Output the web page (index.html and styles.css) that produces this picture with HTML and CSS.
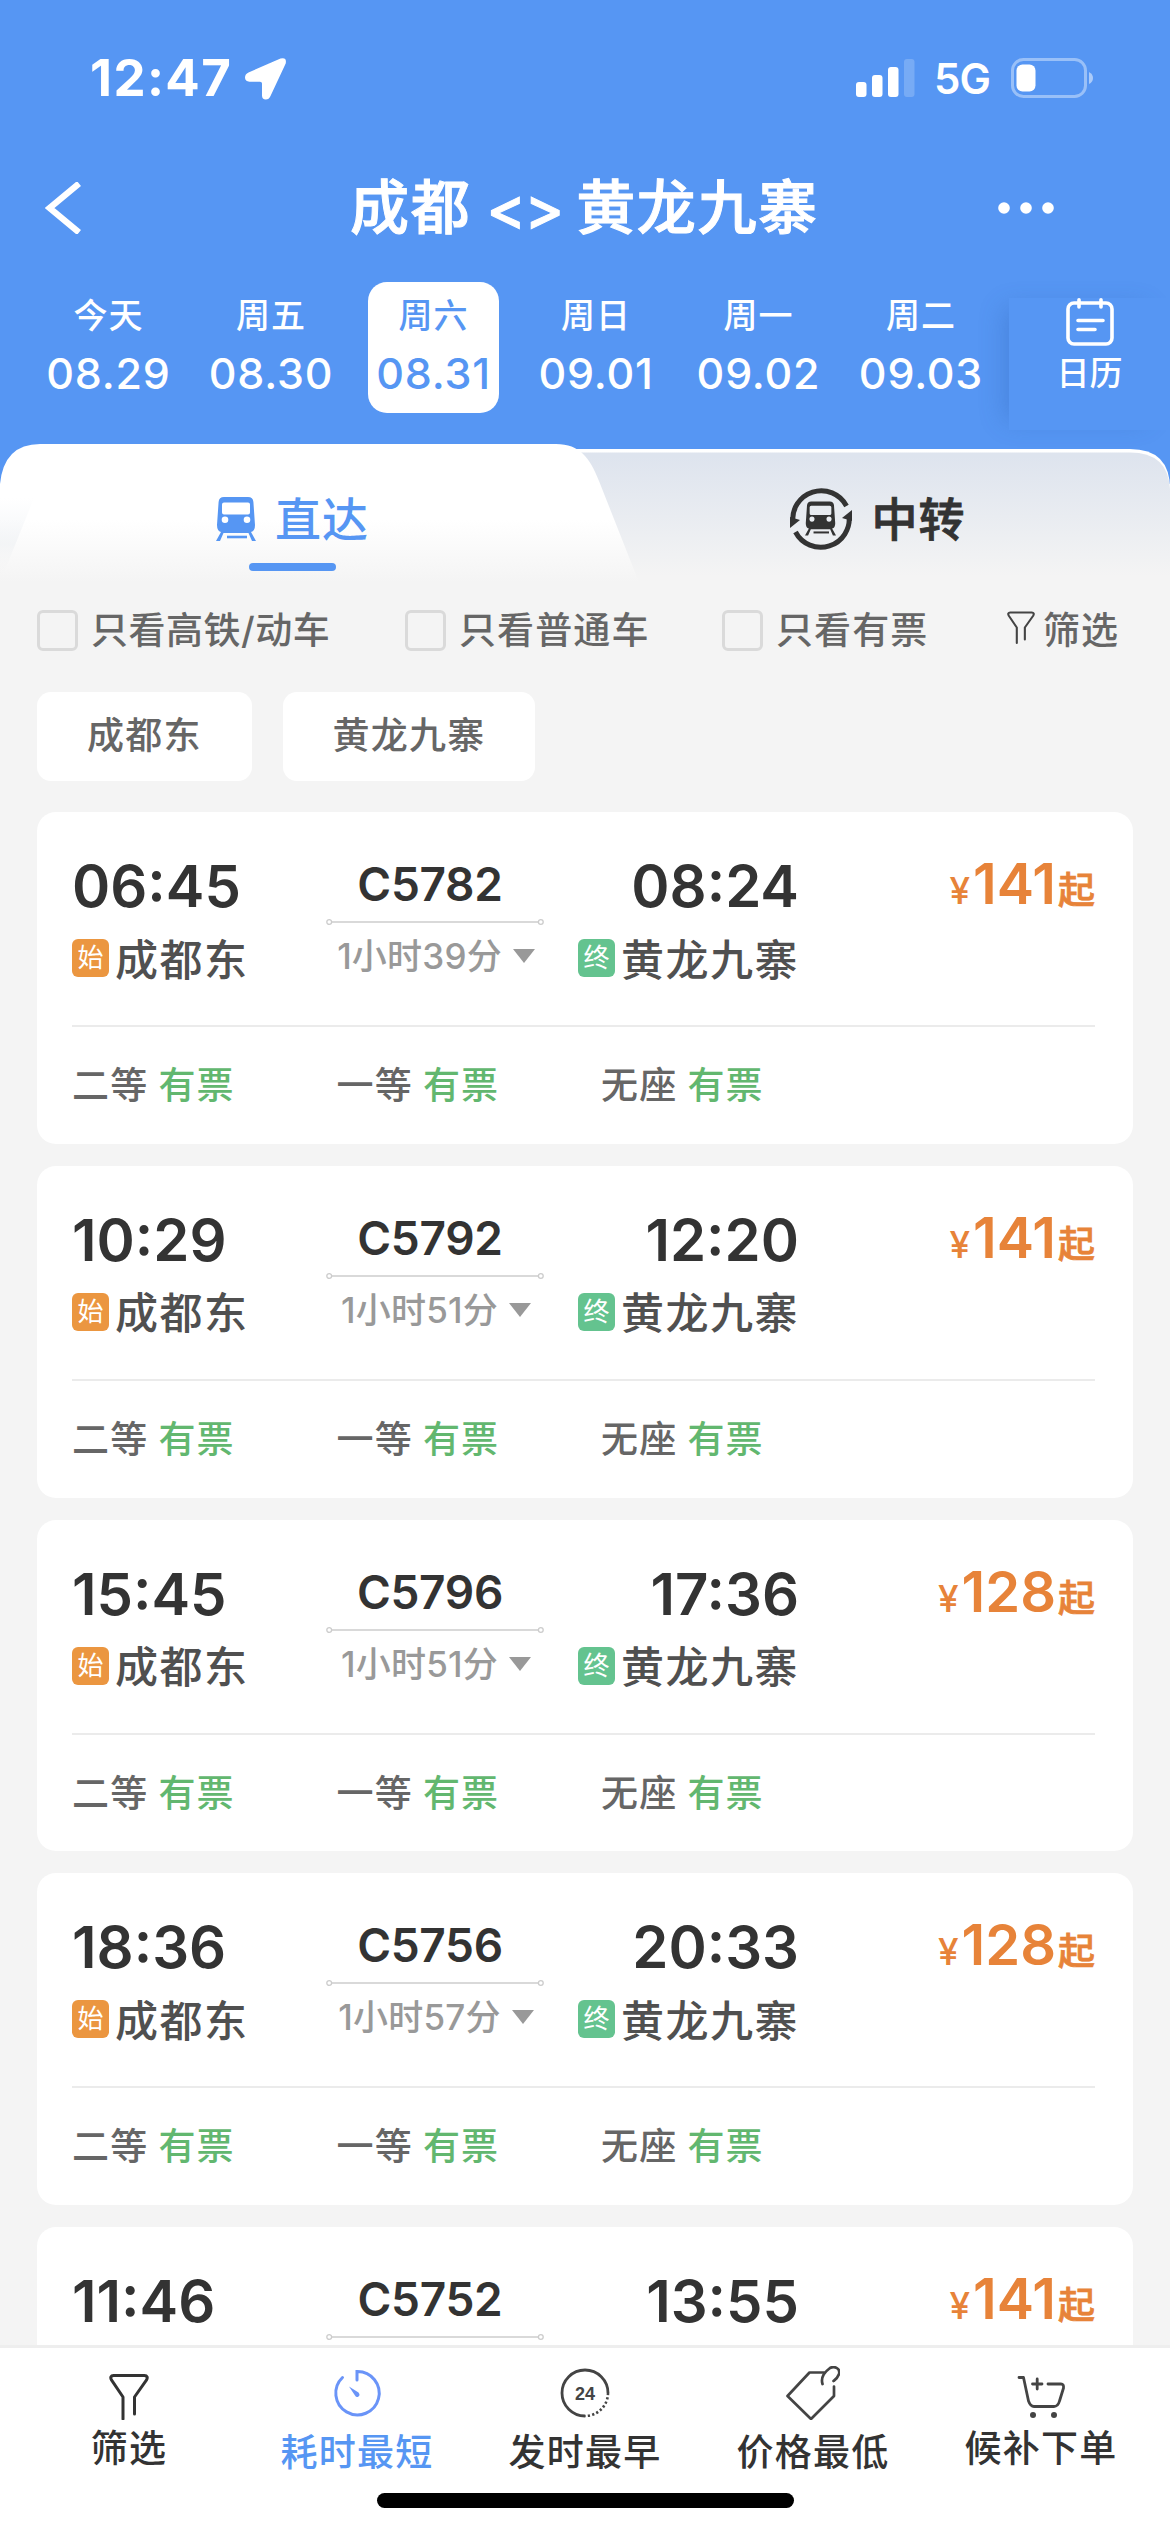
FILE: index.html
```html
<!DOCTYPE html>
<html lang="zh-CN">
<head>
<meta charset="utf-8">
<title>成都 - 黄龙九寨</title>
<link rel="stylesheet" href="styles.css">
</head>
<body>
<svg class="defs" width="0" height="0" aria-hidden="true">
  <symbol id="funnel" viewBox="0 0 40 46">
    <path d="M14 45V23L2.6 6.2C1 3.6 1.8 1.5 4.6 1.5H35.4C38.2 1.5 39 3.6 37.4 6.2L25.500 23V40" fill="none" stroke="currentColor" stroke-width="3" stroke-linecap="round" stroke-linejoin="round"/>
  </symbol>
  <symbol id="train" viewBox="0 0 40 44">
    <path fill="currentColor" fill-rule="evenodd" d="M8 0H32Q37 0 37.400 5L39 28Q39 34 35 35L40 44H36L32.500 36H7.500L4 44H0L5 35Q1 34 1 28L2.600 5Q3 0 8 0ZM8 5.500Q6 5.500 6 7.500V15.500Q6 17.500 8 17.500H32Q34 17.500 34 15.500V7.500Q34 5.500 32 5.500ZM9 19.500A3.300 3.300 0 1 0 9 26.100A3.300 3.300 0 1 0 9 19.500ZM31 19.500A3.300 3.300 0 1 0 31 26.100A3.300 3.300 0 1 0 31 19.500Z"/>
    <path stroke="currentColor" stroke-width="2.600" d="M11 40H31"/>
  </symbol>
  <symbol id="span" viewBox="0 0 218 8">
    <g fill="none" stroke="#ccc" stroke-width="1.300"><path d="M6 4H212"/><circle cx="3.200" cy="4" r="2.400"/><circle cx="214.800" cy="4" r="2.400"/></g>
  </symbol>
</svg>

<main class="screen">
  <header class="top">
    <div class="status">
      <span class="clock">12:47</span>
      <svg class="locate" viewBox="0 0 42 42"><path fill="#fff" d="M3.500 14.500 35.500.6Q42-1 40.700 5.500L25.500 38Q24 41.500 20.800 41.500 17 41.500 17 37.500V25.500Q17 23.700 15 23.700H4.500Q0 23.500 0 19.500 0 16 3.500 14.500Z"/></svg>
      <svg class="signal" viewBox="0 0 59 38"><g fill="#fff"><rect y="23" width="10.500" height="15" rx="3"/><rect x="16" y="16" width="10.500" height="22" rx="3"/><rect x="32" y="8" width="10.500" height="30" rx="3"/><rect x="48" width="10.500" height="38" rx="3" opacity=".2"/></g></svg>
      <span class="net">5G</span>
      <svg class="battery" viewBox="0 0 83 40"><rect x="1.500" y="1.500" width="73" height="37" rx="11" fill="none" stroke="#fff" stroke-opacity=".4" stroke-width="3"/><rect x="5.500" y="6.500" width="19" height="27" rx="6" fill="#fff"/><path d="M78 14Q82 16 82 20T78 26Z" fill="#fff" opacity=".5"/></svg>
    </div>
    <div class="titlebar">
      <svg class="back" viewBox="0 0 36 52"><path d="M34 1.500 4.500 26 34 50.500" fill="none" stroke="#fff" stroke-width="6.200"/></svg>
      <h1><span>成都</span><span class="swap">&lt;&gt;</span><span>黄龙九寨</span></h1>
      <svg class="more" viewBox="0 0 56 14"><g fill="#fff"><circle cx="6" cy="7" r="5.800"/><circle cx="28" cy="7" r="5.800"/><circle cx="50" cy="7" r="5.800"/></g></svg>
    </div>
    <div class="dates">
      <div class="day"><span class="week">今天</span><span class="date">08.29</span></div>
      <div class="day"><span class="week">周五</span><span class="date">08.30</span></div>
      <div class="day on"><span class="week">周六</span><span class="date">08.31</span></div>
      <div class="day"><span class="week">周日</span><span class="date">09.01</span></div>
      <div class="day"><span class="week">周一</span><span class="date">09.02</span></div>
      <div class="day"><span class="week">周二</span><span class="date">09.03</span></div>
      <div class="calendar">
        <svg viewBox="0 0 48 48"><g fill="none" stroke="#fff" stroke-width="3.600" stroke-linecap="round"><rect x="2" y="5" width="44" height="41" rx="6"/><path d="M13 1.800V9M35 1.800V9M12 22.500H37M12 31.500H29"/></g></svg>
        <span>日历</span>
      </div>
    </div>
  </header>

  <nav class="tabs">
    <svg class="tabs-bg" viewBox="0 0 1170 146">
      <defs>
        <linearGradient id="gl" x1="0" y1="0" x2="0" y2="1"><stop offset=".52" stop-color="#fff"/><stop offset=".95" stop-color="#f4f4f4"/></linearGradient>
        <linearGradient id="gr" x1="0" y1="0" x2="0" y2="1"><stop offset=".03" stop-color="#dee4ee"/><stop offset=".9" stop-color="#f4f4f4"/></linearGradient>
        <linearGradient id="gs" x1="0" y1="0" x2="0" y2="1"><stop offset="0" stop-color="#f1f4f7" stop-opacity="0"/><stop offset=".6" stop-color="#f1f3f5" stop-opacity=".8"/><stop offset="1" stop-color="#f4f4f4" stop-opacity="0"/></linearGradient>
      </defs>
      <path d="M500 5H1130Q1170 5 1170 45V146H500Z" fill="#fff"/>
      <path d="M500 8.500H1130Q1168 8.500 1170 45V146H500Z" fill="url(#gr)"/>
      <path d="M0 146V40Q4 0 40 0H556C580 0 590 14 599 37L642 146Z" fill="url(#gl)"/>
      <path d="M0 54H34L3 131H0Z" fill="url(#gs)"/>
    </svg>
    <div class="tab on"><svg class="train"><use href="#train"/></svg><span>直达</span></div>
    <div class="tab">
      <svg class="transfer" viewBox="0 0 62 62"><g fill="none" stroke="#333" stroke-width="5"><path d="M3 35A28.500 28.500 0 0 1 56.500 18"/><path d="M59 27A28.500 28.500 0 0 1 5.500 44"/></g><path fill="#333" d="M0 40V29L10 32ZM62 22V33L52 30Z"/><svg x="15" y="13" width="31" height="35" color="#333"><use href="#train"/></svg></svg>
      <span>中转</span>
    </div>
  </nav>

  <section class="filters">
    <label><i></i><span>只看高铁/动车</span></label>
    <label><i></i><span>只看普通车</span></label>
    <label><i></i><span>只看有票</span></label>
    <div class="pick"><svg><use href="#funnel"/></svg><span>筛选</span></div>
  </section>
  <section class="chips"><span>成都东</span><span>黄龙九寨</span></section>

  <section class="list">
    <article class="card">
      <div class="trip">
        <div class="dep"><div class="time">06:45</div><div class="station"><b class="start">始</b><span>成都东</span></div></div>
        <div class="mid"><div class="no">C5782</div><svg class="span"><use href="#span"/></svg><div class="dur">1小时39分<i></i></div></div>
        <div class="arr"><div class="time">08:24</div><div class="station"><b class="end">终</b><span>黄龙九寨</span></div></div>
        <div class="price"><small>¥</small>141<em>起</em></div>
      </div>
      <div class="seats"><div>二等<span>有票</span></div><div>一等<span>有票</span></div><div>无座<span>有票</span></div></div>
    </article>
    <article class="card">
      <div class="trip">
        <div class="dep"><div class="time">10:29</div><div class="station"><b class="start">始</b><span>成都东</span></div></div>
        <div class="mid"><div class="no">C5792</div><svg class="span"><use href="#span"/></svg><div class="dur">1小时51分<i></i></div></div>
        <div class="arr"><div class="time">12:20</div><div class="station"><b class="end">终</b><span>黄龙九寨</span></div></div>
        <div class="price"><small>¥</small>141<em>起</em></div>
      </div>
      <div class="seats"><div>二等<span>有票</span></div><div>一等<span>有票</span></div><div>无座<span>有票</span></div></div>
    </article>
    <article class="card">
      <div class="trip">
        <div class="dep"><div class="time">15:45</div><div class="station"><b class="start">始</b><span>成都东</span></div></div>
        <div class="mid"><div class="no">C5796</div><svg class="span"><use href="#span"/></svg><div class="dur">1小时51分<i></i></div></div>
        <div class="arr"><div class="time">17:36</div><div class="station"><b class="end">终</b><span>黄龙九寨</span></div></div>
        <div class="price"><small>¥</small>128<em>起</em></div>
      </div>
      <div class="seats"><div>二等<span>有票</span></div><div>一等<span>有票</span></div><div>无座<span>有票</span></div></div>
    </article>
    <article class="card">
      <div class="trip">
        <div class="dep"><div class="time">18:36</div><div class="station"><b class="start">始</b><span>成都东</span></div></div>
        <div class="mid"><div class="no">C5756</div><svg class="span"><use href="#span"/></svg><div class="dur">1小时57分<i></i></div></div>
        <div class="arr"><div class="time">20:33</div><div class="station"><b class="end">终</b><span>黄龙九寨</span></div></div>
        <div class="price"><small>¥</small>128<em>起</em></div>
      </div>
      <div class="seats"><div>二等<span>有票</span></div><div>一等<span>有票</span></div><div>无座<span>有票</span></div></div>
    </article>
    <article class="card">
      <div class="trip">
        <div class="dep"><div class="time">11:46</div></div>
        <div class="mid"><div class="no">C5752</div><svg class="span"><use href="#span"/></svg></div>
        <div class="arr"><div class="time">13:55</div></div>
        <div class="price"><small>¥</small>141<em>起</em></div>
      </div>
    </article>
  </section>

  <footer class="bottom">
    <div class="sorts">
      <div class="sort high"><svg class="f" viewBox="0 0 40 46"><use href="#funnel"/></svg><span>筛选</span></div>
      <div class="sort on"><svg viewBox="0 0 54 54"><g fill="none" stroke="#6a94f8" stroke-width="3" stroke-linecap="round"><path d="M12.500 11.500A21.700 21.700 0 1 0 27 5.500V14"/></g><path d="M19 20.500 28.500 26.500Q30.500 29 28.500 30.500T25 29.500Z" fill="#6a94f8"/></svg><span>耗时最短</span></div>
      <div class="sort"><svg viewBox="0 0 54 54"><path d="M50 27A23 23 0 1 0 27 50" fill="none" stroke="#444" stroke-width="2.800"/><path d="M50 27A23 23 0 0 1 27 50" fill="none" stroke="#444" stroke-width="2.600" stroke-dasharray="2.200 2.200"/><text x="27" y="34" text-anchor="middle" class="h24">24</text></svg><span>发时最早</span></div>
      <div class="sort"><svg viewBox="0 0 54 54"><g fill="none" stroke="#444" stroke-width="2.700" stroke-linejoin="round" stroke-linecap="round"><path d="M38 6.500H23.500L1.500 30 25 53 48 30V20.500"/><path d="M36.500 18C34 10 40 5 44 2 49-.5 55 3 52.800 8.500 51.500 12 50 13 47.500 15"/></g></svg><span>价格最低</span></div>
      <div class="sort high"><svg viewBox="0 0 54 54"><g fill="none" stroke="#444" stroke-width="2.800" stroke-linecap="round" stroke-linejoin="round"><path d="M5 11.500H9.500L14.500 35Q16.500 40.500 20 40.500H40Q44 40.500 45.500 35L49.500 22Q50 18 47 18H34M18.500 18H28M23.200 13V23"/></g><circle cx="19" cy="49" r="3" fill="#444"/><circle cx="40" cy="49" r="3" fill="#444"/></svg><span>候补下单</span></div>
    </div>
    <div class="home"></div>
  </footer>
</main>
</body>
</html>
```
FILE: styles.css
```css
* { box-sizing: border-box; margin: 0; padding: 0; }
body {
  width: 1170px;
  height: 2532px;
  overflow: hidden;
  background: #f4f4f4;
  font-family: Inter, "Noto Sans CJK SC", sans-serif;
  font-weight: 500;
  color: #333;
}
svg { display: block; flex: none; }
.defs { position: absolute; }
i, em { font-style: normal; }
.screen { display: flex; flex-direction: column; height: 2532px; overflow: hidden; }

.top { height: 484px; margin-bottom: -40px; background: #5696f3; color: #fff; flex: none; }
.status { display: flex; align-items: center; height: 155px; padding: 0 76px 0 90px; }
.clock { width: 155px; font-size: 51px; font-weight: 700; letter-spacing: 1.400px; }
.locate { width: 42px; height: 42px; margin-top: 2px; }
.signal { width: 59px; height: 38px; margin-left: auto; }
.net { width: 75px; padding-left: 19px; font-size: 42px; font-weight: 600; line-height: 60px; margin-top: 3px; letter-spacing: -1px; }
.battery { width: 83px; height: 40px; margin-left: 21px; }
.titlebar { display: flex; align-items: center; height: 105px; padding: 0 116px 0 45px; }
.back { width: 36px; height: 52px; }
.titlebar h1 { display: flex; align-items: center; font-size: 59px; line-height: 80px; font-weight: 500; letter-spacing: 1.700px; margin-left: 269px; -webkit-text-stroke: 1px #fff; }
.swap { letter-spacing: -1px; margin: 0 13px 0 15px; }
.more { width: 56px; height: 14px; margin-left: auto; }
.dates { display: flex; height: 170px; padding: 22px 0 0 43px; }
.day { display: flex; flex-direction: column; align-items: center; width: 131px; height: 131px; margin-right: 31.500px; border-radius: 19px; padding-top: 14px; flex: none; }
.day.on { background: #fff; color: #5696f3; }
.week { font-size: 34px; line-height: 40px; letter-spacing: 1px; }
.date { font-size: 43px; line-height: 50px; margin-top: 12px; letter-spacing: 0.800px; }
.calendar { display: flex; flex-direction: column; align-items: center; flex: 1; height: 132px; margin: 16px 0 0 -9px; background: #5696f3; box-shadow: -14px 0 24px -10px rgba(40, 90, 170, 0.3); font-size: 33px; line-height: 40px; }
.calendar svg { width: 48px; height: 48px; margin-bottom: 7px; }

.tabs { position: relative; display: flex; height: 146px; flex: none; }
.tabs-bg { position: absolute; inset: 0; width: 1170px; height: 146px; }
.tab { position: relative; display: flex; flex: 1; align-items: center; justify-content: center; height: 150px; font-size: 46px; font-weight: 500; letter-spacing: 1px; gap: 20px; -webkit-text-stroke: 0.800px currentColor; }
.tab span { padding-bottom: 6px; }
.tab.on { gap: 19px; color: #5696f3; -webkit-text-stroke: 0; }
.tab.on::after { content: ""; position: absolute; left: 249px; top: 119px; width: 87px; height: 8px; border-radius: 4px; background: #5696f3; }
.train { width: 40px; height: 44px; }
.transfer { width: 62px; height: 62px; }

.filters { display: flex; align-items: center; height: 80px; padding: 0 0 0 37px; font-size: 37px; letter-spacing: 1.100px; color: #666; flex: none; }
.filters label { display: flex; align-items: center; white-space: nowrap; }
.filters label:nth-child(1) { width: 368px; letter-spacing: 0.500px; }
.filters label:nth-child(2) { width: 317px; }
.filters label:nth-child(3) { width: 285px; }
.filters i { width: 41px; height: 41px; margin-right: 13px; border: 3px solid #dadada; border-radius: 6px; }
.filters span { padding-bottom: 5px; }
.pick { display: flex; align-items: center; gap: 8px; }
.pick svg { width: 28px; height: 33px; margin-top: -5px; color: #444; }
.chips { display: flex; gap: 31px; padding: 22px 37px 0; height: 142px; flex: none; }
.chips span { height: 89px; padding: 0 50px; border-radius: 14px; background: #fff; color: #666; font-size: 37px; line-height: 87px; letter-spacing: 1.200px; }

.list { display: flex; flex-direction: column; gap: 22px; height: 1533px; overflow: hidden; padding: 0 37px; flex: none; }
.card { height: 331.750px; padding: 0 38px 0 35px; background: #fff; border-radius: 19px; flex: none; }
.trip { display: flex; height: 215px; border-bottom: 2px solid #ebebeb; }
.dep { width: 254px; padding-top: 44px; }
.mid { width: 218px; padding-top: 47px; display: flex; flex-direction: column; align-items: center; }
.arr { width: 255px; padding-top: 44px; display: flex; flex-direction: column; align-items: flex-end; }
.time { font-size: 58px; line-height: 60px; font-weight: 600; }
.station { display: flex; align-items: center; height: 44px; margin-top: 20px; font-size: 43px; letter-spacing: 1.500px; color: #505050; white-space: nowrap; }
.station span { padding-bottom: 3px; }
.station b { width: 37px; height: 38px; margin-right: 6px; border-radius: 6px; color: #fff; font-size: 26px; font-weight: 400; line-height: 37px; text-align: center; letter-spacing: 0; }
.start { background: #eb9640; }
.end { background: #64c38f; }
.no { font-size: 46px; line-height: 50px; font-weight: 600; letter-spacing: -0.300px; margin-left: -10px; }
.span { width: 218px; height: 8px; margin-top: 9px; }
.dur { display: flex; align-items: center; margin: 10px 0 0 2px; font-size: 35px; line-height: 40px; color: #999; font-weight: 500; letter-spacing: 0.200px; white-space: nowrap; }
.dur i { margin-left: 11px; border: 11px solid transparent; border-top: 14px solid #999; border-bottom: 0; }
.price { flex: 1; padding-top: 42px; text-align: right; color: #e78339; font-size: 56px; line-height: 60px; font-weight: 600; white-space: nowrap; }
.price small { font-size: 37px; font-weight: 500; margin-right: 3px; }
.price em { font-size: 37px; font-weight: 500; margin-left: 2px; -webkit-text-stroke: 0.700px currentColor; }
.seats { display: flex; height: 112px; align-items: center; font-size: 37px; letter-spacing: 1.200px; color: #666; }
.seats div { width: 264.500px; }
.seats span { margin-left: 10px; color: #62b76f; }

.bottom { position: relative; height: 187px; border-top: 3px solid #eee; background: #fff; flex: none; }
.sorts { display: flex; padding: 18px 15px 0 15px; }
.sort { display: flex; flex: 1; flex-direction: column; align-items: center; font-size: 37px; line-height: 48px; letter-spacing: 1.200px; }
.sort.on { color: #5696f3; }
.sort svg { width: 54px; height: 54px; margin-bottom: 9px; }
.sort.high svg { margin-bottom: 5px; }
.sort .f { width: 40px; height: 46px; margin-top: 8px; }
.h24 { font: 700 18px "Liberation Sans", sans-serif; letter-spacing: 0; fill: #444; }
.home { width: 417px; height: 15px; margin: 16px auto 0; border-radius: 8px; background: #000; }
```
